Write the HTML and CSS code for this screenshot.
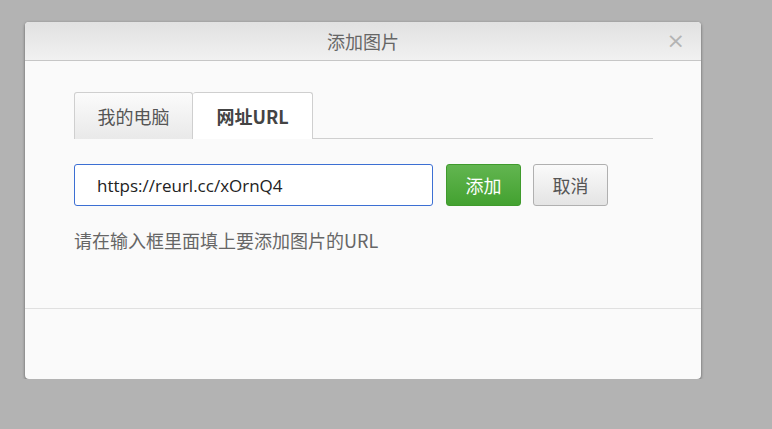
FILE: index.html
```html
<!DOCTYPE html>
<html lang="zh">
<head>
<meta charset="utf-8">
<title>添加图片</title>
<link rel="stylesheet" href="styles.css">
</head>
<body>
<div class="dialog">
  <div class="dialog-header">
    <span class="dialog-title">添加图片</span>
    <span class="dialog-close">×</span>
  </div>
  <div class="dialog-body">
    <div class="tabs">
      <div class="tab">我的电脑</div>
      <div class="tab active">网址URL</div>
    </div>
    <div class="url-row">
      <input class="url-input" type="text" value="https://reurl.cc/xOrnQ4">
      <button class="btn btn-primary">添加</button>
      <button class="btn btn-default">取消</button>
    </div>
    <p class="hint">请在输入框里面填上要添加图片的URL</p>
  </div>
  <div class="dialog-footer"></div>
</div>
</body>
</html>
```
FILE: styles.css
```css
html, body {
  margin: 0;
  padding: 0;
  background: #b3b3b3;
  font-family: "Open Sans", "Noto Sans CJK SC", sans-serif;
}
.dialog {
  margin: 22px 0 0 25px;
  width: 676px;
  height: 357px;
  background: #fafafa;
  border-radius: 4px;
  box-shadow: 0 1px 3px rgba(0,0,0,0.5);
  overflow: hidden;
  display: flex;
  flex-direction: column;
}
.dialog-header {
  position: relative;
  height: 38px;
  border-bottom: 1px solid #c6c6c6;
  background: linear-gradient(#e1e1e1, #f1f1f1);
  display: flex;
  align-items: center;
  justify-content: center;
}
.dialog-title {
  font-family: "Noto Sans CJK SC", sans-serif;
  font-size: 18px;
  color: #666;
}
.dialog-close {
  position: absolute;
  right: 16px;
  top: 6px;
  font-family: "DejaVu Sans", sans-serif;
  font-size: 22px;
  color: #b4b4b4;
  line-height: 26px;
}
.dialog-body {
  height: 216px;
  padding: 31px 48px 0 49px;
  border-bottom: 1px solid #e0e0e0;
}
.tabs {
  display: flex;
  border-bottom: 1px solid #cfcfcf;
}
.tab {
  width: 119px;
  height: 47px;
  box-sizing: border-box;
  border: 1px solid #cfcfcf;
  border-bottom: none;
  border-radius: 3px 3px 0 0;
  background: linear-gradient(#fbfbfb, #e9e9e9);
  font-family: "Noto Sans CJK SC", sans-serif;
  font-size: 18px;
  color: #555;
  display: flex;
  align-items: center;
  justify-content: center;
  margin-bottom: -1px;
}
.tab.active {
  width: 120px;
  background: #fff;
  border-left: none;
  font-weight: bold;
  color: #444;
}
.url-row {
  display: flex;
  align-items: center;
  margin-top: 25px;
}
.url-input {
  width: 359px;
  height: 42px;
  box-sizing: border-box;
  border: 1px solid #3c6fd3;
  border-radius: 3px;
  padding: 0 0 0 22px;
  font-family: "Open Sans", sans-serif;
  font-size: 17px;
  color: #222;
  background: #fff;
  outline: none;
}
.btn {
  height: 42px;
  width: 75px;
  box-sizing: border-box;
  border-radius: 3px;
  font-family: "Noto Sans CJK SC", sans-serif;
  font-size: 18px;
  padding: 0;
}
.btn-primary {
  margin-left: 13px;
  border: 1px solid #3f9a2c;
  background: linear-gradient(#62b550, #43a130);
  color: #fff;
}
.btn-default {
  margin-left: 12px;
  border: 1px solid #b0b0b0;
  background: linear-gradient(#fafafa, #e4e4e4);
  color: #555;
}
.hint {
  margin: 21px 0 0;
  font-family: "Noto Sans CJK SC", sans-serif;
  font-size: 18px;
  color: #666;
}
.dialog-footer {
  flex: 1;
}
```
